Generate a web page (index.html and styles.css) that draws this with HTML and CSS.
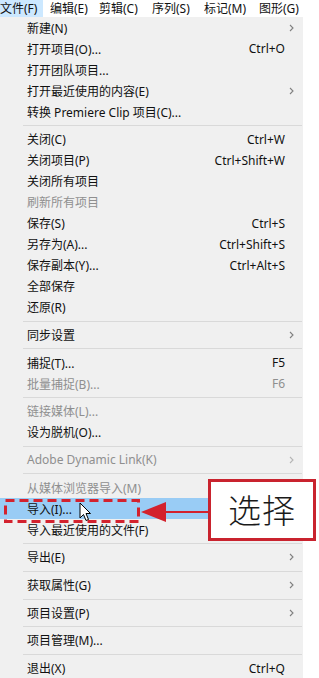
FILE: index.html
```html
<!DOCTYPE html>
<html lang="zh-CN">
<head>
    <meta charset="UTF-8">
    <meta name="viewport" content="width=device-width, initial-scale=1.0">
    <title>文件菜单</title>
    <link rel="stylesheet" href="styles.css">
</head>
<body>
    <div class="menubar">
        <span class="mb-item"><span class="mb-active">文件(F)</span></span>
        <span class="mb-item">编辑(E)</span>
        <span class="mb-item">剪辑(C)</span>
        <span class="mb-item">序列(S)</span>
        <span class="mb-item">标记(M)</span>
        <span class="mb-item">图形(G)</span>
    </div>

    <div class="menu">
        <div class="item"><span class="label">新建(N)</span><span class="key"></span><span class="arrow"><svg width="5" height="8" viewBox="0 0 5 8"><polyline points="1,1 4,4 1,7" /></svg></span></div>
        <div class="item"><span class="label">打开项目(O)...</span><span class="key">Ctrl+O</span><span class="arrow"></span></div>
        <div class="item"><span class="label">打开团队项目...</span><span class="key"></span><span class="arrow"></span></div>
        <div class="item"><span class="label">打开最近使用的内容(E)</span><span class="key"></span><span class="arrow"><svg width="5" height="8" viewBox="0 0 5 8"><polyline points="1,1 4,4 1,7" /></svg></span></div>
        <div class="item"><span class="label">转换 Premiere Clip 项目(C)...</span><span class="key"></span><span class="arrow"></span></div>
        <div class="sep"></div>
        <div class="item"><span class="label">关闭(C)</span><span class="key">Ctrl+W</span><span class="arrow"></span></div>
        <div class="item"><span class="label">关闭项目(P)</span><span class="key">Ctrl+Shift+W</span><span class="arrow"></span></div>
        <div class="item"><span class="label">关闭所有项目</span><span class="key"></span><span class="arrow"></span></div>
        <div class="item disabled"><span class="label">刷新所有项目</span><span class="key"></span><span class="arrow"></span></div>
        <div class="item"><span class="label">保存(S)</span><span class="key">Ctrl+S</span><span class="arrow"></span></div>
        <div class="item"><span class="label">另存为(A)...</span><span class="key">Ctrl+Shift+S</span><span class="arrow"></span></div>
        <div class="item"><span class="label">保存副本(Y)...</span><span class="key">Ctrl+Alt+S</span><span class="arrow"></span></div>
        <div class="item"><span class="label">全部保存</span><span class="key"></span><span class="arrow"></span></div>
        <div class="item"><span class="label">还原(R)</span><span class="key"></span><span class="arrow"></span></div>
        <div class="sep"></div>
        <div class="item"><span class="label">同步设置</span><span class="key"></span><span class="arrow"><svg width="5" height="8" viewBox="0 0 5 8"><polyline points="1,1 4,4 1,7" /></svg></span></div>
        <div class="sep"></div>
        <div class="item"><span class="label">捕捉(T)...</span><span class="key">F5</span><span class="arrow"></span></div>
        <div class="item disabled"><span class="label">批量捕捉(B)...</span><span class="key">F6</span><span class="arrow"></span></div>
        <div class="sep"></div>
        <div class="item disabled"><span class="label">链接媒体(L)...</span><span class="key"></span><span class="arrow"></span></div>
        <div class="item"><span class="label">设为脱机(O)...</span><span class="key"></span><span class="arrow"></span></div>
        <div class="sep"></div>
        <div class="item disabled"><span class="label">Adobe Dynamic Link(K)</span><span class="key"></span><span class="arrow"><svg width="5" height="8" viewBox="0 0 5 8"><polyline points="1,1 4,4 1,7" /></svg></span></div>
        <div class="sep"></div>
        <div class="item disabled"><span class="label">从媒体浏览器导入(M)</span><span class="key"></span><span class="arrow"></span></div>
        <div class="item hover"><span class="label">导入(I)...</span><span class="key"></span><span class="arrow"></span></div>
        <div class="item"><span class="label">导入最近使用的文件(F)</span><span class="key"></span><span class="arrow"></span></div>
        <div class="sep"></div>
        <div class="item"><span class="label">导出(E)</span><span class="key"></span><span class="arrow"><svg width="5" height="8" viewBox="0 0 5 8"><polyline points="1,1 4,4 1,7" /></svg></span></div>
        <div class="sep"></div>
        <div class="item"><span class="label">获取属性(G)</span><span class="key"></span><span class="arrow"><svg width="5" height="8" viewBox="0 0 5 8"><polyline points="1,1 4,4 1,7" /></svg></span></div>
        <div class="sep"></div>
        <div class="item"><span class="label">项目设置(P)</span><span class="key"></span><span class="arrow"><svg width="5" height="8" viewBox="0 0 5 8"><polyline points="1,1 4,4 1,7" /></svg></span></div>
        <div class="sep"></div>
        <div class="item"><span class="label">项目管理(M)...</span><span class="key"></span><span class="arrow"></span></div>
        <div class="sep"></div>
        <div class="item"><span class="label">退出(X)</span><span class="key">Ctrl+Q</span><span class="arrow"></span></div>
    </div>

    <!-- 教程标注 -->
    <svg class="dash-box" width="138" height="26" viewBox="0 0 138 26">
        <rect x="1.5" y="1.5" width="133" height="21" fill="none" stroke="#d3222e" stroke-width="3" stroke-dasharray="9 5" />
    </svg>
    <svg class="callout-arrow" width="70" height="24" viewBox="0 0 70 24">
        <polygon points="1,12 26,2 26,22" fill="#d3222e" />
        <rect x="25" y="11" width="45" height="2" fill="#d3222e" />
    </svg>
    <div class="callout">选择</div>
    <svg class="cursor" width="14" height="21" viewBox="0 0 14 21">
        <path d="M1,1 L1,16 L4.5,12.5 L7,18.5 L9.5,17.5 L7,11.5 L11.5,11.5 Z" fill="#fff" stroke="#000" stroke-width="1" stroke-linejoin="round" />
    </svg>
</body>
</html>
```

FILE: styles.css
```css
body {
    margin: 0;
    width: 319px;
    height: 678px;
    overflow: hidden;
    position: relative;
    background-color: #fff;
    font-family: "Noto Sans", "Noto Sans CJK SC", sans-serif;
    font-size: 12px;
    color: #111;
}
.menubar {
    display: grid;
    grid-template-columns: 50px 49px 53px 52px 55px auto;
    height: 17px;
    line-height: 17px;
    background-color: #fff;
    white-space: nowrap;
}
.mb-active {
    display: block;
    width: 43px;
    height: 17px;
    background-color: #cce8ff;
}
.menu {
    width: 303px;
    padding: 0 0 4px;
    background-color: #f0f0f0;
}
.item {
    display: flex;
    align-items: center;
    height: 21px;
    padding-left: 27px;
    white-space: nowrap;
}
.item .label {
    flex: 1;
}
.item .key {
    text-align: right;
}
.item .arrow {
    width: 18px;
    padding-left: 4px;
    box-sizing: border-box;
    display: flex;
    align-items: center;
}
.arrow polyline {
    fill: none;
    stroke: #808080;
    stroke-width: 1.1;
}
.disabled {
    color: #8f8f8f;
}
.disabled .arrow polyline {
    stroke: #b5b5b5;
}
.hover {
    background-color: #99ccf5;
}
.sep {
    height: 1px;
    margin: 3px 1px 2.7px 23px;
    background-color: #d9d9d9;
}
.dash-box {
    position: absolute;
    left: 4px;
    top: 499px;
}
.callout-arrow {
    position: absolute;
    left: 140px;
    top: 500px;
}
.callout {
    position: absolute;
    left: 208px;
    top: 479px;
    width: 108px;
    height: 62px;
    box-sizing: border-box;
    border: 3px solid #c9232e;
    background-color: #fff;
    font-family: "Noto Sans CJK SC", sans-serif;
    font-size: 33px;
    font-weight: 300;
    line-height: 54px;
    text-align: center;
    letter-spacing: 1px;
    color: #1a1a1a;
}
.cursor {
    position: absolute;
    left: 79px;
    top: 502px;
}
```
